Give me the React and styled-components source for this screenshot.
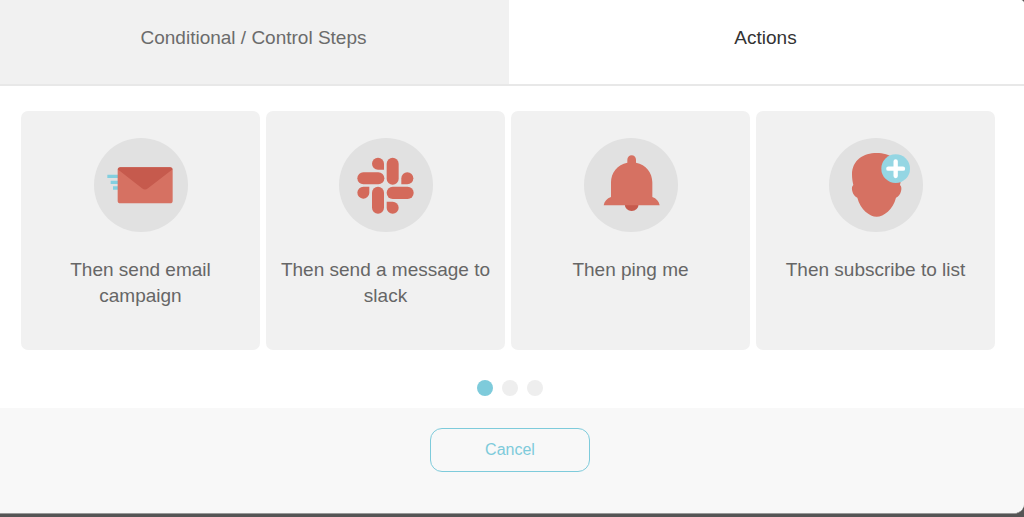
import React, { useState } from 'react';
import styled, { createGlobalStyle } from 'styled-components';

const EmailIcon = () => (
  <Icon viewBox="40 24 282 282" aria-hidden="true">
    <circle cx="181" cy="165" r="141" fill="#e1e1e1" />
    <path d="M80 139H112M90 157H112M97 174H112" stroke="#83cfdf" strokeWidth="10" />
    <rect x="111" y="112" width="165" height="108" rx="8" fill="#d67162" />
    <path
      d="M119 112H268Q274 112 276 118L202 175Q193 182 184 175L111 118Q113 112 119 112Z"
      fill="#c65a4d"
    />
  </Icon>
);

const SlackIcon = () => (
  <Icon viewBox="40 24 282 282" aria-hidden="true">
    <circle cx="181" cy="165" r="141" fill="#e1e1e1" />
    <g fill="#d46a5b">
      <rect x="183" y="83" width="36" height="81" rx="18" />
      <rect x="95" y="127" width="81" height="36" rx="18" />
      <rect x="139" y="170" width="36" height="81" rx="18" />
      <rect x="183" y="170" width="81" height="37" rx="18" />
      <path d="M175 119V101A18 18 0 1 0 157 119Z" />
      <path d="M227 163V145A18 18 0 1 1 245 163Z" />
      <path d="M131 170V189A18 18 0 1 1 113 170Z" />
      <path d="M183 215H201A18 18 0 1 1 183 233Z" />
    </g>
  </Icon>
);

const BellIcon = () => (
  <Icon viewBox="40 24 282 282" aria-hidden="true">
    <circle cx="181" cy="165" r="141" fill="#e1e1e1" />
    <path d="M162 222A21 21 0 0 0 204 222Z" fill="#c65a4d" />
    <path
      d="M170 98V89A13 13 0 0 1 196 89V98C226 104 245 128 245 157V201C257 205 265 214 267 226H99C101 214 109 205 121 201V157C121 128 140 104 170 98Z"
      fill="#d67162"
    />
  </Icon>
);

const SubscribeIcon = () => (
  <Icon viewBox="40 24 282 282" aria-hidden="true">
    <circle cx="181" cy="165" r="141" fill="#e1e1e1" />
    <path
      d="M183 69C144 69 109 90 109 134C109 146 111 155 113 165C108 170 108 176 110 184C112 194 118 200 125 203C134 238 162 260 183 260C204 260 232 238 241 203C248 200 254 194 256 184C258 176 258 170 253 165C255 155 257 146 257 134C257 90 222 69 183 69Z"
      fill="#d67162"
    />
    <circle cx="240" cy="116" r="43" fill="#95d6e3" />
    <path d="M240 94V138M218 116H262" stroke="#fff" strokeWidth="13" strokeLinecap="round" />
  </Icon>
);

const actions = [
  { label: 'Then send email campaign', icon: EmailIcon },
  { label: 'Then send a message to slack', icon: SlackIcon },
  { label: 'Then ping me', icon: BellIcon },
  { label: 'Then subscribe to list', icon: SubscribeIcon },
];

const App = () => {
  const [tab, setTab] = useState('actions');
  const [page, setPage] = useState(0);

  return (
    <>
      <GlobalStyle />
      <Modal>
        <Tabs role="tablist">
          <Tab
            type="button"
            role="tab"
            aria-selected={tab === 'control'}
            $active={tab === 'control'}
            onClick={() => setTab('control')}
          >
            Conditional / Control Steps
          </Tab>
          <Tab
            type="button"
            role="tab"
            aria-selected={tab === 'actions'}
            $active={tab === 'actions'}
            onClick={() => setTab('actions')}
          >
            Actions
          </Tab>
        </Tabs>

        <Cards>
          {actions.map(({ label, icon: ActionIcon }) => (
            <Card type="button" key={label}>
              <ActionIcon />
              <CardLabel>{label}</CardLabel>
            </Card>
          ))}
        </Cards>

        <Dots>
          {[0, 1, 2].map((n) => (
            <Dot
              type="button"
              key={n}
              $active={n === page}
              aria-label={`Page ${n + 1}`}
              onClick={() => setPage(n)}
            />
          ))}
        </Dots>

        <Footer>
          <CancelButton type="button">Cancel</CancelButton>
        </Footer>
      </Modal>
    </>
  );
};

export default App;

const GlobalStyle = createGlobalStyle`
  * {
    box-sizing: border-box;
  }
  body {
    margin: 0;
    background: #555;
    font-family: 'Liberation Sans', Arial, sans-serif;
  }
  button {
    margin: 0;
    font-family: inherit;
    cursor: pointer;
  }
`;

const Modal = styled.main`
  background: #fff;
  border-bottom: 1px solid #999;
  border-radius: 0 4px 10px 0;
  overflow: hidden;
`;

const Tabs = styled.div`
  display: grid;
  grid-template-columns: 509fr 515fr;
  border-bottom: 2px solid #e8e8e8;
`;

const Tab = styled.button`
  padding: 25px 2px 33px 0;
  border: 0;
  background: ${({ $active }) => ($active ? '#fff' : '#f1f1f1')};
  color: ${({ $active }) => ($active ? '#333' : '#6b6b6b')};
  font-size: 19px;
  line-height: 26px;
`;

const Cards = styled.section`
  display: grid;
  grid-template-columns: repeat(4, 1fr);
  gap: 6px;
  padding: 25px 29px 30px 21px;
`;

const Card = styled.button`
  display: flex;
  flex-direction: column;
  align-items: center;
  gap: 25px;
  padding: 27px 12px 41px;
  border: 0;
  border-radius: 7px;
  background: #f1f1f1;
  color: #666;
`;

const CardLabel = styled.span`
  font-size: 19px;
  line-height: 26px;
`;

const Icon = styled.svg`
  display: block;
  width: 94px;
  height: 94px;
`;

const Dots = styled.nav`
  display: flex;
  justify-content: center;
  gap: 9px;
  padding: 0 4px 12px 0;
`;

const Dot = styled.button`
  width: 16px;
  height: 16px;
  padding: 0;
  border: 0;
  border-radius: 50%;
  background: ${({ $active }) => ($active ? '#7ecbdb' : '#eee')};
`;

const Footer = styled.footer`
  display: flex;
  justify-content: center;
  padding: 20px 4px 41px 0;
  background: #f8f8f8;
`;

const CancelButton = styled.button`
  width: 160px;
  height: 44px;
  border: 1px solid #7ecbdb;
  border-radius: 12px;
  background: transparent;
  color: #7ecbdb;
  font-size: 16px;
`;
